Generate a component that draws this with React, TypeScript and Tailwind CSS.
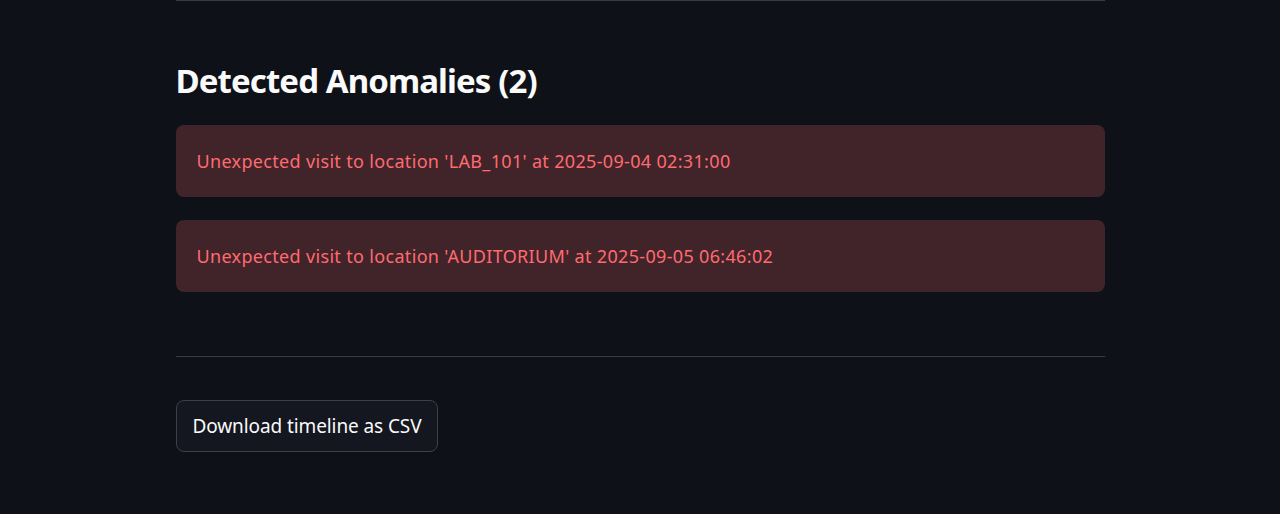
import React from "react";

const alerts = [
  "Unexpected visit to location 'LAB_101' at 2025-09-04 02:31:00",
  "Unexpected visit to location 'AUDITORIUM' at 2025-09-05 06:46:02",
];

export default function App() {
  return (
    <div
      className="min-h-[514px] w-full bg-[#0e1117] text-white"
      style={{ fontFamily: '"Noto Sans", "Open Sans", sans-serif' }}
    >
      <div className="mx-auto w-[929px]">
        <hr className="border-0 border-t border-[#3a3c43]" />

        <h2 className="mt-[56px] text-[33px] font-bold leading-[48px] tracking-[-0.9px] text-[#fafafa]">
          Detected Anomalies (2)
        </h2>

        <div className="mt-[20px] flex flex-col gap-[23px]">
          {alerts.map((a) => (
            <div
              key={a}
              className="flex h-[72px] items-center rounded-[8px] bg-[#41232a] pl-[21px] text-[18px] tracking-[0.33px] text-[#ff6b6f]"
            >
              {a}
            </div>
          ))}
        </div>

        <hr className="mt-[64px] border-0 border-t border-[#3a3c43]" />

        <button className="mt-[43px] h-[52px] rounded-[8px] border border-[#3d4049] bg-[#14171f] px-[16px] text-[19px] tracking-[-0.1px] text-[#fafafa]">
          Download timeline as CSV
        </button>
      </div>
    </div>
  );
}
